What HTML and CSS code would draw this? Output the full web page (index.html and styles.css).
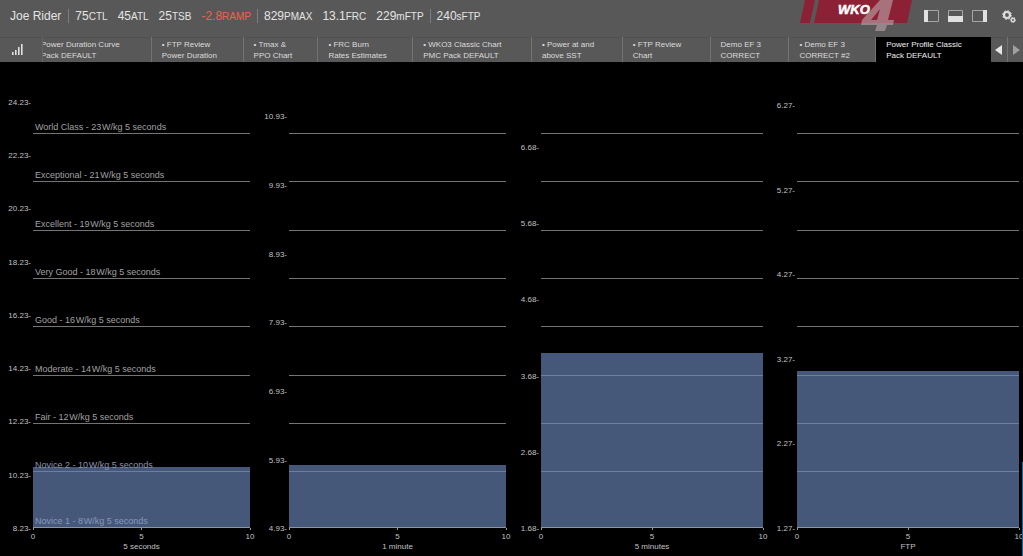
FILE: index.html
```html
<!DOCTYPE html>
<html lang="en">
<head>
<meta charset="utf-8">
<title>WKO4 - Power Profile Classic</title>
<link rel="stylesheet" href="styles.css">
</head>
<body>
<header class="topbar">
  <span class="athlete">Joe Rider</span>
  <div class="group">
    <span class="stat">75<small>CTL</small></span>
    <span class="stat">45<small>ATL</small></span>
    <span class="stat">25<small>TSB</small></span>
    <span class="stat stat-alert">-2.8<small>RAMP</small></span>
  </div>
  <div class="group">
    <span class="stat">829<small>PMAX</small></span>
    <span class="stat">13.1<small>FRC</small></span>
    <span class="stat">229<small>mFTP</small></span>
  </div>
  <div class="group">
    <span class="stat">240<small>sFTP</small></span>
  </div>
  <svg class="logo" width="114" height="34" viewBox="0 0 114 34" role="img" aria-label="WKO4">
    <path d="M5 0H15L10 23H0Z" fill="#8c2034"/>
    <path d="M19 0H112L107 23H14Z" fill="#8c2034"/>
    <text class="logo-name" x="38" y="14">WKO</text>
    <path d="M80 0H93L88 20H94L93 25H87L85 31H75L77 25H61L62 20ZM80 9L71 20H77Z" fill="#b8a4aa" fill-opacity=".62" fill-rule="evenodd"/>
  </svg>
  <div class="tools">
    <button class="tool" aria-label="Left panel"><svg width="15" height="12" viewBox="0 0 15 12"><path d="M.5 .5H14.5V11.5H.5Z" fill="none" stroke="#a5a5a5"/><path d="M0 0H4V12H0Z" fill="#e0e0e0"/></svg></button>
    <button class="tool" aria-label="Bottom panel"><svg width="15" height="12" viewBox="0 0 15 12"><path d="M.5 .5H14.5V11.5H.5Z" fill="none" stroke="#a5a5a5"/><path d="M0 6H15V12H0Z" fill="#e0e0e0"/></svg></button>
    <button class="tool" aria-label="Right panel"><svg width="15" height="12" viewBox="0 0 15 12"><path d="M.5 .5H14.5V11.5H.5Z" fill="none" stroke="#a5a5a5"/><path d="M11 0H15V12H11Z" fill="#e0e0e0"/></svg></button>
    <button class="tool tool-settings" aria-label="Settings"><svg width="14" height="13" viewBox="0 0 14 13" fill="none" stroke="#dcdcdc"><circle cx="5" cy="5" r="3" stroke-width="2.2"/><circle cx="5" cy="5" r="4.4" stroke-width="1" stroke-dasharray="1.7 1.75"/><circle cx="11" cy="10" r="1.7" stroke-width="1.5"/><circle cx="11" cy="10" r="2.6" stroke-width=".8" stroke-dasharray="1.2 1.4"/></svg></button>
  </div>
</header>

<nav class="tabbar">
  <button class="chart-menu" aria-label="Charts"><svg width="11" height="11" viewBox="0 0 11 11" fill="#e0e0e0"><path d="M0 8H1.6V11H0ZM3 6H4.6V11H3ZM6 3H7.6V11H6ZM9 0H10.6V11H9Z"/></svg></button>
  <div class="tabs">
    <button class="tab tab-cut">Power Duration Curve<br>Pack DEFAULT</button>
    <button class="tab">• FTP Review<br>Power Duration</button>
    <button class="tab">• Tmax &amp;<br>PPO Chart</button>
    <button class="tab">• FRC Burn<br>Rates Estimates</button>
    <button class="tab">• WKO3 Classic Chart<br>PMC Pack DEFAULT</button>
    <button class="tab">• Power at and<br>above SST</button>
    <button class="tab">• FTP Review<br>Chart</button>
    <button class="tab">Demo EF 3<br>CORRECT</button>
    <button class="tab">• Demo EF 3<br>CORRECT #2</button>
    <button class="tab tab-active" aria-current="page">Power Profile Classic<br>Pack DEFAULT</button>
  </div>
  <button class="scroll" aria-label="Previous tabs"><svg width="8" height="10" viewBox="0 0 8 10"><path d="M7 0V10L0 5Z" fill="#e6e6e6"/></svg></button>
  <button class="scroll" aria-label="Next tabs"><svg width="8" height="10" viewBox="0 0 8 10"><path d="M1 0V10L8 5Z" fill="#a0a0a0"/></svg></button>
</nav>

<main class="charts">
  <section class="chart">
    <div class="y-axis axis-a">
      <span style="bottom:91.4%">24.23-</span><span style="bottom:80%">22.23-</span><span style="bottom:68.6%">20.23-</span><span style="bottom:57.1%">18.23-</span><span style="bottom:45.7%">16.23-</span><span style="bottom:34.3%">14.23-</span><span style="bottom:22.9%">12.23-</span><span style="bottom:11.4%">10.23-</span><span style="bottom:0%">8.23-</span>
    </div>
    <div class="plot">
      <div class="bar" style="height:13.1%"></div>
      <div class="level" style="bottom:84.6%">World Class - 23&#8202;W/kg 5 seconds</div>
      <div class="level" style="bottom:74.2%">Exceptional - 21&#8202;W/kg 5 seconds</div>
      <div class="level" style="bottom:63.8%">Excellent - 19&#8202;W/kg 5 seconds</div>
      <div class="level" style="bottom:53.5%">Very Good - 18&#8202;W/kg 5 seconds</div>
      <div class="level" style="bottom:43.2%">Good - 16&#8202;W/kg 5 seconds</div>
      <div class="level" style="bottom:32.7%">Moderate - 14&#8202;W/kg 5 seconds</div>
      <div class="level" style="bottom:22.4%">Fair - 12&#8202;W/kg 5 seconds</div>
      <div class="level level-edge" style="bottom:12%">Novice 2 - 10&#8202;W/kg 5 seconds</div>
      <div class="level level-base" style="bottom:0%">Novice 1 - 8&#8202;W/kg 5 seconds</div>
    </div>
    <div class="x-axis"><div class="x-ticks"><span>0</span><span>5</span><span>10</span></div><div class="x-title">5 seconds</div></div>
  </section>

  <section class="chart">
    <div class="y-axis axis-b">
      <span style="bottom:88.4%">10.93-</span><span style="bottom:73.7%">9.93-</span><span style="bottom:58.9%">8.93-</span><span style="bottom:44.2%">7.93-</span><span style="bottom:29.5%">6.93-</span><span style="bottom:14.7%">5.93-</span><span style="bottom:0%">4.93-</span>
    </div>
    <div class="plot">
      <div class="bar" style="height:13.6%"></div>
      <div class="level" style="bottom:84.6%"></div><div class="level" style="bottom:74.2%"></div><div class="level" style="bottom:63.8%"></div><div class="level" style="bottom:53.5%"></div><div class="level" style="bottom:43.2%"></div><div class="level" style="bottom:32.7%"></div><div class="level" style="bottom:22.4%"></div><div class="level level-over" style="bottom:12%"></div><div class="level level-base" style="bottom:0%"></div>
    </div>
    <div class="x-axis"><div class="x-ticks"><span>0</span><span>5</span><span>10</span></div><div class="x-title">1 minute</div></div>
  </section>

  <section class="chart">
    <div class="y-axis axis-c">
      <span style="bottom:81.7%">6.68-</span><span style="bottom:65.4%">5.68-</span><span style="bottom:49.1%">4.68-</span><span style="bottom:32.7%">3.68-</span><span style="bottom:16.4%">2.68-</span><span style="bottom:0%">1.68-</span>
    </div>
    <div class="plot">
      <div class="bar" style="height:37.6%"></div>
      <div class="level" style="bottom:84.6%"></div><div class="level" style="bottom:74.2%"></div><div class="level" style="bottom:63.8%"></div><div class="level" style="bottom:53.5%"></div><div class="level" style="bottom:43.2%"></div><div class="level level-over" style="bottom:32.7%"></div><div class="level level-over" style="bottom:22.4%"></div><div class="level level-over" style="bottom:12%"></div><div class="level level-base" style="bottom:0%"></div>
    </div>
    <div class="x-axis"><div class="x-ticks"><span>0</span><span>5</span><span>10</span></div><div class="x-title">5 minutes</div></div>
  </section>

  <section class="chart">
    <div class="y-axis axis-d">
      <span style="bottom:90.8%">6.27-</span><span style="bottom:72.6%">5.27-</span><span style="bottom:54.5%">4.27-</span><span style="bottom:36.3%">3.27-</span><span style="bottom:18.2%">2.27-</span><span style="bottom:0%">1.27-</span>
    </div>
    <div class="plot">
      <div class="bar" style="height:33.7%"></div>
      <div class="level" style="bottom:84.6%"></div><div class="level" style="bottom:74.2%"></div><div class="level" style="bottom:63.8%"></div><div class="level" style="bottom:53.5%"></div><div class="level" style="bottom:43.2%"></div><div class="level level-over" style="bottom:32.7%"></div><div class="level level-over" style="bottom:22.4%"></div><div class="level level-over" style="bottom:12%"></div><div class="level level-base" style="bottom:0%"></div>
    </div>
    <div class="x-axis"><div class="x-ticks"><span>0</span><span>5</span><span>10</span></div><div class="x-title">FTP</div></div>
  </section>
  <div class="edge"></div>
</main>
</body>
</html>
```
FILE: styles.css
```css
* { box-sizing: border-box; }
body {
  margin: 0;
  min-height: 100vh;
  display: flex;
  flex-direction: column;
  overflow: hidden;
  background: #000;
  color: #e4e4e4;
  font-family: "Liberation Sans", Arial, Helvetica, sans-serif;
  font-size: 8px;
}
button {
  margin: 0;
  padding: 0;
  border: 0;
  background: none;
  color: inherit;
  font: inherit;
}
svg { display: block; }

/* Athlete summary bar */
.topbar {
  display: flex;
  height: 37px;
  padding: 0 7px 0 10px;
  background: #585858;
  font-size: 12px;
  white-space: nowrap;
}
.athlete, .group, .tools { display: flex; align-items: center; height: 32px; }
.athlete { padding-right: 7px; }
.group { gap: 10px; padding-right: 6px; }
.group::before { content: ""; width: 1px; height: 14px; margin-right: -4px; background: #7d7d7d; }
.stat small { font-size: 10px; }
.stat-alert { color: #f0604c; }
.logo { margin-left: auto; }
.logo-name {
  fill: #fff;
  stroke: #fff;
  stroke-width: .5px;
  font-size: 13px;
  font-weight: bold;
  font-style: italic;
}
.tools { gap: 9px; margin-left: 10px; }
.tool-settings { margin-left: 6px; }

/* Chart tabs */
.tabbar {
  display: flex;
  height: 25px;
  background: #585858;
  box-shadow: inset 0 1px #505050;
}
.chart-menu { width: 42px; padding-left: 12px; }
.tabs {
  flex: 1;
  display: grid;
  grid-template-columns: 109fr 92fr 75fr 95fr 119fr 91fr 88fr 79fr 87fr 115fr;
  overflow: hidden;
  border-left: 1px solid #666;
}
.tab {
  min-width: 0;
  padding: 0 0 0 10px;
  border-right: 1px solid #737373;
  color: #dcdcdc;
  text-align: left;
  font-size: 8px;
  line-height: 11px;
  white-space: nowrap;
}
.tab-cut { margin-left: -2px; padding-left: 0; }
.tab-active { border: 0; background: #000; color: #f0f0f0; }
.scroll {
  display: flex;
  align-items: center;
  justify-content: center;
  width: 16px;
}
.scroll + .scroll { border-left: 1px solid #737373; }

/* Charts */
.charts {
  position: relative;
  flex: 1;
  display: grid;
  grid-template-columns: 250fr 256fr 257fr 256fr;
  padding-right: 4px;
  color: #c0c0c0;
}
.chart {
  display: grid;
  grid-template-columns: auto 1fr;
  grid-template-rows: 1fr 28px;
}
.y-axis { position: relative; }
.axis-a { width: 33px; }
.axis-b { width: 39px; }
.axis-c { width: 35px; }
.axis-d { width: 34px; }
.y-axis span {
  position: absolute;
  right: 2px;
  line-height: 10px;
  margin-bottom: -6px;
}
.plot { position: relative; }
.bar {
  position: absolute;
  inset: auto 0 0;
  background: #465879;
}
.level {
  position: absolute;
  left: 0;
  right: 0;
  padding: 0 0 1px 2px;
  border-bottom: 1px solid #747474;
  color: #a0a0a0;
  font-size: 9px;
  line-height: 10px;
  white-space: nowrap;
}
.level-over { border-color: #6c7f a3; border-color: #6c7fa3; }
.level-edge { border-color: #6c7fa3; color: #8a95ac; }
.level-base { border-color: #8c95a4; color: #8797bb; }
.x-axis {
  grid-column: 2;
  text-align: center;
  line-height: 10px;
}
.x-ticks { display: flex; justify-content: space-between; }
.x-ticks span {
  width: 10px;
  margin: 0 -5px;
  padding-top: 4px;
  background: linear-gradient(#999, #999) center top / 1px 2px no-repeat;
}
.edge {
  position: absolute;
  right: 0;
  bottom: 0;
  width: 1px;
  height: 19%;
  background: #12699b;
}
```
